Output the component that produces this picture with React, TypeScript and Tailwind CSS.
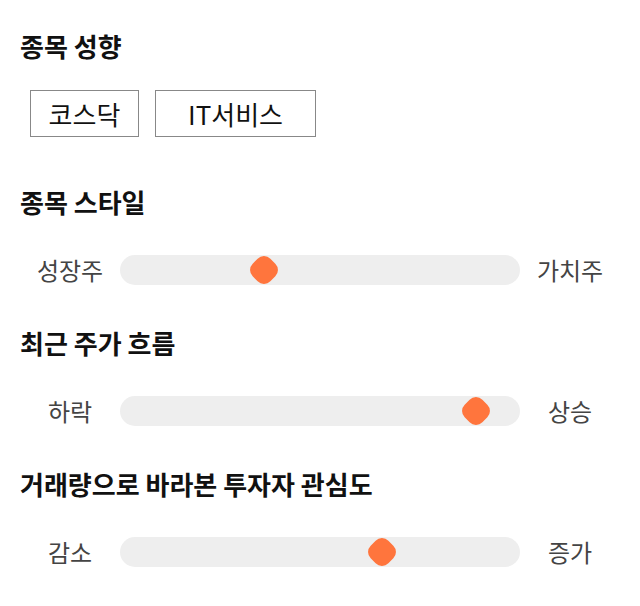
import { useState } from "react";

type SliderRow = {
  title: string;
  left: string;
  right: string;
  value: number; // 0..1
};

const SLIDERS: SliderRow[] = [
  { title: "종목 스타일", left: "성장주", right: "가치주", value: 0.35 },
  { title: "최근 주가 흐름", left: "하락", right: "상승", value: 0.92 },
  { title: "거래량으로 바라본 투자자 관심도", left: "감소", right: "증가", value: 0.667 },
];

const TAGS = [
  { label: "코스닥", w: "w-[109px]" },
  { label: "IT서비스", w: "w-[161px]" },
];

function Heading({ children }: { children: string }) {
  return (
    <h2 className="text-[26px] font-bold leading-[30px] text-[#111]">{children}</h2>
  );
}

function Slider({ row }: { row: SliderRow }) {
  const [value] = useState(row.value);

  return (
    <div className="flex items-center h-[30px]">
      <span className="w-[100px] shrink-0 text-center text-[24px] leading-[30px] text-[#444]">{row.left}</span>
      <div className="relative h-[30px] flex-1 rounded-full bg-[#eeeeee]">
        <div
          className="absolute top-1/2 h-[25px] w-[25px] -translate-x-1/2 -translate-y-1/2 rotate-45 rounded-[9px] bg-[#ff753d]"
          style={{ left: `calc(14px + ${value} * (100% - 28px))` }}
        />
      </div>
      <span className="w-[100px] shrink-0 text-center text-[24px] leading-[30px] text-[#444]">{row.right}</span>
    </div>
  );
}

export default function App() {
  return (
    <div
      className="w-[640px] h-[606px] bg-white px-5 pt-[31px]"
      style={{ fontFamily: '"Noto Sans CJK KR", "Noto Sans", sans-serif' }}
    >
      <Heading>종목 성향</Heading>
      <div className="mt-[29px] ml-[10px] flex gap-4">
        {TAGS.map((t) => (
          <span
            key={t.label}
            className={`flex h-[47px] items-center justify-center border border-[#888] text-[26px] text-[#111] ${t.w}`}
          >
            {t.label}
          </span>
        ))}
      </div>

      {SLIDERS.map((s, i) => (
        <div key={s.title} className={i === 0 ? "mt-[50px]" : "mt-[43px]"}>
          <Heading>{s.title}</Heading>
          <div className="mt-[38px]">
            <Slider row={s} />
          </div>
        </div>
      ))}
    </div>
  );
}
